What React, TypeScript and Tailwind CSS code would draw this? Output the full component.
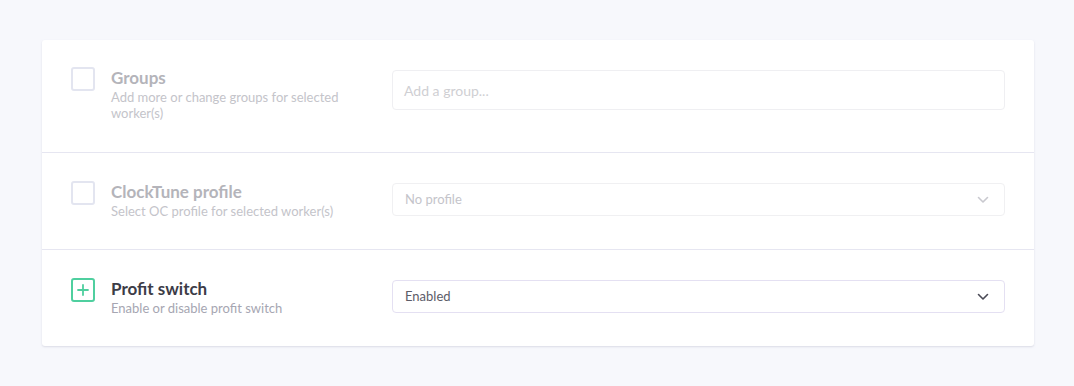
import React from "react";

function Chevron({ color }: { color: string }) {
  return (
    <svg width="12" height="8" viewBox="0 0 12 8" fill="none">
      <path d="M1.5 1.5 L6 6 L10.5 1.5" stroke={color} strokeWidth="1.6" strokeLinecap="round" strokeLinejoin="round" />
    </svg>
  );
}

function Check({ active }: { active?: boolean }) {
  if (active) {
    return (
      <div className="w-6 h-6 shrink-0 rounded-[3px] border-2 border-[#4fcf9f] flex items-center justify-center">
        <svg width="12" height="12" viewBox="0 0 12 12">
          <path d="M6 1 V11 M1 6 H11" stroke="#4fcf9f" strokeWidth="1.8" strokeLinecap="round" />
        </svg>
      </div>
    );
  }
  return <div className="w-6 h-6 shrink-0 rounded-[3px] border-2 border-[#e3e5f0]" />;
}

export default function App() {
  return (
    <div className="min-h-[386px] bg-[#f7f8fc] pt-10 px-[42px] pb-10" style={{ fontFamily: "Lato, 'Open Sans', sans-serif" }}>
      <div className="bg-white rounded-[3px] shadow-[0_1px_2px_rgba(200,200,215,0.6)] w-[992px]">
        {/* Row 1 */}
        <div className="flex px-[29px] pt-[27px] pb-[31px] border-b border-[#e6e6f1]">
          <div className="w-[321px] flex gap-4">
            <Check />
            <div className="pt-[1px]">
              <div className="text-[17px] leading-[20px] font-bold text-[#b4b4ba]">Groups</div>
              <div className="text-[13px] leading-[16px] text-[#c4c4ca] w-[240px] mt-[1px]">Add more or change groups for selected worker(s)</div>
            </div>
          </div>
          <div className="flex-1 pt-[3px]">
            <div className="h-10 border border-[#efeff2] rounded-[4px] flex items-center px-[11px] text-[14px] text-[#cfcfd3]">Add a group...</div>
          </div>
        </div>
        {/* Row 2 */}
        <div className="flex px-[29px] pt-[28px] pb-[30px] border-b border-[#e6e6f1]">
          <div className="w-[321px] flex gap-4">
            <Check />
            <div className="pt-[1px]">
              <div className="text-[17px] leading-[20px] font-bold text-[#b4b4ba]">ClockTune profile</div>
              <div className="text-[13px] leading-[16px] text-[#c4c4ca] mt-[1px]">Select OC profile for selected worker(s)</div>
            </div>
          </div>
          <div className="flex-1 pt-[2px]">
            <div className="h-[33px] border border-[#f0f0f2] rounded-[4px] flex items-center justify-between pl-3 pr-[15px] text-[13px] text-[#c4c4ca]">
              <span>No profile</span>
              <Chevron color="#c9c9cf" />
            </div>
          </div>
        </div>
        {/* Row 3 */}
        <div className="flex px-[29px] pt-[28px] pb-[30px]">
          <div className="w-[321px] flex gap-4">
            <Check active />
            <div className="pt-[1px]">
              <div className="text-[17px] leading-[20px] font-bold text-[#3c3c47]">Profit switch</div>
              <div className="text-[13px] leading-[16px] text-[#a6a6b2] mt-[1px]">Enable or disable profit switch</div>
            </div>
          </div>
          <div className="flex-1 pt-[2px]">
            <div className="h-[33px] border border-[#e4e0f2] rounded-[4px] flex items-center justify-between pl-3 pr-[15px] text-[13px] text-[#5c5c68]">
              <span>Enabled</span>
              <Chevron color="#4a4a55" />
            </div>
          </div>
        </div>
      </div>
    </div>
  );
}
